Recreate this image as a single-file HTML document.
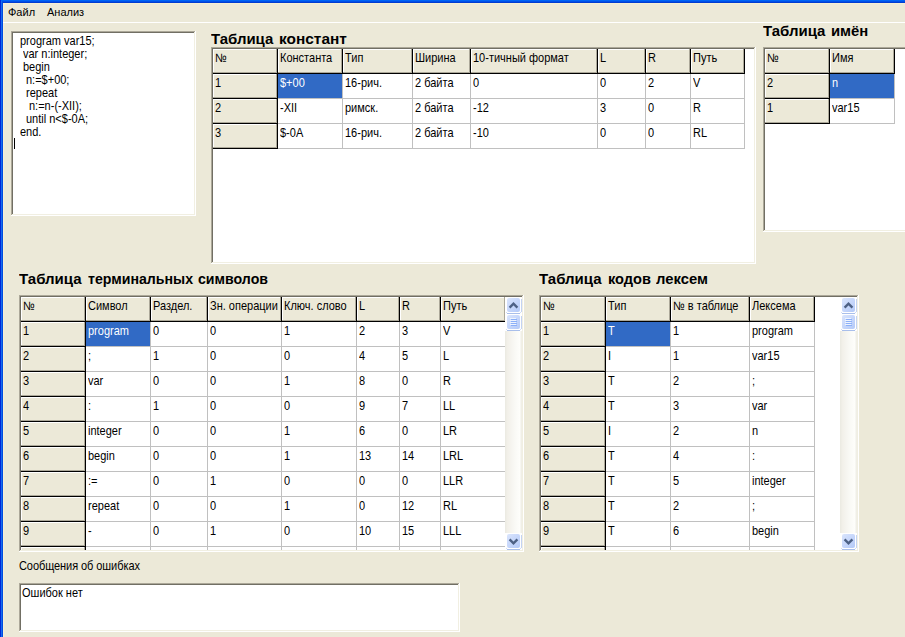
<!DOCTYPE html>
<html><head><meta charset="utf-8"><style>
html,body{margin:0;padding:0}
body{width:905px;height:637px;overflow:hidden;position:relative;background:#ECE9D8;font-family:"Liberation Sans",sans-serif}
div{position:absolute;box-sizing:content-box}
.t{font-size:11px;line-height:13px;white-space:pre;color:#000;transform:scaleY(1.1);transform-origin:0 10px}
.m{font-size:11px;line-height:13px;white-space:pre;color:#000}
.b{font-size:14px;font-weight:bold;line-height:16px;white-space:pre;color:#000}
</style></head><body>
<div style="left:0px;top:0px;width:905px;height:1px;background:#0064F6;"></div>
<div style="left:0px;top:1px;width:905px;height:1px;background:#0050E8;"></div>
<div style="left:0px;top:2px;width:905px;height:1px;background:#003CD2;"></div>
<div style="left:0px;top:0px;width:1px;height:637px;background:#0026D6;"></div>
<div style="left:1px;top:1px;width:1px;height:636px;background:#166CEE;"></div>
<div style="left:2px;top:2px;width:1px;height:635px;background:#004CE0;"></div>
<div style="left:3px;top:3px;width:902px;height:1px;background:#F7EFD4;"></div>
<div style="left:3px;top:3px;width:1px;height:634px;background:#F7EFD4;"></div>
<div class="m" style="left:8px;top:6px;color:#000;">Файл</div>
<div class="m" style="left:47px;top:6px;color:#000;">Анализ</div>
<div style="left:3px;top:22px;width:902px;height:1px;background:#fff;"></div>
<div style="left:11px;top:31px;width:185px;height:185px;background:#fff;"></div>
<div style="left:11px;top:31px;width:184px;height:184px;background:#ACA899;"></div>
<div style="left:12px;top:32px;width:183px;height:183px;background:#F1EFE2;"></div>
<div style="left:12px;top:32px;width:182px;height:182px;background:#716F64;"></div>
<div style="left:13px;top:33px;width:181px;height:181px;background:#fff;"></div>
<div class="t" style="left:20px;top:35px;color:#000;">program var15;</div>
<div class="t" style="left:23px;top:48px;color:#000;">var n:integer;</div>
<div class="t" style="left:23px;top:61px;color:#000;">begin</div>
<div class="t" style="left:26px;top:74px;color:#000;">n:=$+00;</div>
<div class="t" style="left:26px;top:87px;color:#000;">repeat</div>
<div class="t" style="left:29px;top:100px;color:#000;">n:=n-(-XII);</div>
<div class="t" style="left:26px;top:113px;color:#000;">until n<$-0A;</div>
<div class="t" style="left:20px;top:126px;color:#000;">end.</div>
<div style="left:14px;top:138px;width:1px;height:11px;background:#000;"></div>
<div class="b" style="left:211.30px;top:31px;transform:scaleX(1.0678);transform-origin:0 0">Таблица</div>
<div class="b" style="left:279.00px;top:31px;transform:scaleX(1.1016);transform-origin:0 0">констант</div>
<div style="left:211px;top:47px;width:545px;height:217px;background:#fff;"></div>
<div style="left:211px;top:47px;width:544px;height:216px;background:#ACA899;"></div>
<div style="left:212px;top:48px;width:543px;height:215px;background:#F1EFE2;"></div>
<div style="left:212px;top:48px;width:542px;height:214px;background:#716F64;"></div>
<div style="left:213px;top:49px;width:541px;height:213px;background:#fff;"></div>
<div style="left:213px;top:49px;width:541px;height:213px;overflow:hidden">
<div style="left:0px;top:0px;width:64px;height:24px;background:#ECE9D8;"></div>
<div style="left:0px;top:0px;width:64px;height:1px;background:#fff;"></div>
<div style="left:0px;top:0px;width:1px;height:24px;background:#fff;"></div>
<div style="left:0px;top:23px;width:64px;height:1px;background:#ACA899;"></div>
<div style="left:63px;top:0px;width:1px;height:24px;background:#ACA899;"></div>
<div style="left:64px;top:0px;width:1px;height:25px;background:#000;"></div>
<div style="left:0px;top:24px;width:65px;height:1px;background:#000;"></div>
<div class="t" style="left:2px;top:3px;color:#000">№</div>
<div style="left:65px;top:0px;width:64px;height:24px;background:#ECE9D8;"></div>
<div style="left:65px;top:0px;width:64px;height:1px;background:#fff;"></div>
<div style="left:65px;top:0px;width:1px;height:24px;background:#fff;"></div>
<div style="left:65px;top:23px;width:64px;height:1px;background:#ACA899;"></div>
<div style="left:128px;top:0px;width:1px;height:24px;background:#ACA899;"></div>
<div style="left:129px;top:0px;width:1px;height:25px;background:#000;"></div>
<div style="left:65px;top:24px;width:65px;height:1px;background:#000;"></div>
<div class="t" style="left:67px;top:3px;color:#000">Константа</div>
<div style="left:130px;top:0px;width:69px;height:24px;background:#ECE9D8;"></div>
<div style="left:130px;top:0px;width:69px;height:1px;background:#fff;"></div>
<div style="left:130px;top:0px;width:1px;height:24px;background:#fff;"></div>
<div style="left:130px;top:23px;width:69px;height:1px;background:#ACA899;"></div>
<div style="left:198px;top:0px;width:1px;height:24px;background:#ACA899;"></div>
<div style="left:199px;top:0px;width:1px;height:25px;background:#000;"></div>
<div style="left:130px;top:24px;width:70px;height:1px;background:#000;"></div>
<div class="t" style="left:132px;top:3px;color:#000">Тип</div>
<div style="left:200px;top:0px;width:57px;height:24px;background:#ECE9D8;"></div>
<div style="left:200px;top:0px;width:57px;height:1px;background:#fff;"></div>
<div style="left:200px;top:0px;width:1px;height:24px;background:#fff;"></div>
<div style="left:200px;top:23px;width:57px;height:1px;background:#ACA899;"></div>
<div style="left:256px;top:0px;width:1px;height:24px;background:#ACA899;"></div>
<div style="left:257px;top:0px;width:1px;height:25px;background:#000;"></div>
<div style="left:200px;top:24px;width:58px;height:1px;background:#000;"></div>
<div class="t" style="left:202px;top:3px;color:#000">Ширина</div>
<div style="left:258px;top:0px;width:126px;height:24px;background:#ECE9D8;"></div>
<div style="left:258px;top:0px;width:126px;height:1px;background:#fff;"></div>
<div style="left:258px;top:0px;width:1px;height:24px;background:#fff;"></div>
<div style="left:258px;top:23px;width:126px;height:1px;background:#ACA899;"></div>
<div style="left:383px;top:0px;width:1px;height:24px;background:#ACA899;"></div>
<div style="left:384px;top:0px;width:1px;height:25px;background:#000;"></div>
<div style="left:258px;top:24px;width:127px;height:1px;background:#000;"></div>
<div class="t" style="left:260px;top:3px;color:#000">10-тичный формат</div>
<div style="left:385px;top:0px;width:47px;height:24px;background:#ECE9D8;"></div>
<div style="left:385px;top:0px;width:47px;height:1px;background:#fff;"></div>
<div style="left:385px;top:0px;width:1px;height:24px;background:#fff;"></div>
<div style="left:385px;top:23px;width:47px;height:1px;background:#ACA899;"></div>
<div style="left:431px;top:0px;width:1px;height:24px;background:#ACA899;"></div>
<div style="left:432px;top:0px;width:1px;height:25px;background:#000;"></div>
<div style="left:385px;top:24px;width:48px;height:1px;background:#000;"></div>
<div class="t" style="left:387px;top:3px;color:#000">L</div>
<div style="left:433px;top:0px;width:44px;height:24px;background:#ECE9D8;"></div>
<div style="left:433px;top:0px;width:44px;height:1px;background:#fff;"></div>
<div style="left:433px;top:0px;width:1px;height:24px;background:#fff;"></div>
<div style="left:433px;top:23px;width:44px;height:1px;background:#ACA899;"></div>
<div style="left:476px;top:0px;width:1px;height:24px;background:#ACA899;"></div>
<div style="left:477px;top:0px;width:1px;height:25px;background:#000;"></div>
<div style="left:433px;top:24px;width:45px;height:1px;background:#000;"></div>
<div class="t" style="left:435px;top:3px;color:#000">R</div>
<div style="left:478px;top:0px;width:53px;height:24px;background:#ECE9D8;"></div>
<div style="left:478px;top:0px;width:53px;height:1px;background:#fff;"></div>
<div style="left:478px;top:0px;width:1px;height:24px;background:#fff;"></div>
<div style="left:478px;top:23px;width:53px;height:1px;background:#ACA899;"></div>
<div style="left:530px;top:0px;width:1px;height:24px;background:#ACA899;"></div>
<div style="left:531px;top:0px;width:1px;height:25px;background:#000;"></div>
<div style="left:478px;top:24px;width:54px;height:1px;background:#000;"></div>
<div class="t" style="left:480px;top:3px;color:#000">Путь</div>
<div style="left:0px;top:25px;width:64px;height:24px;background:#ECE9D8;"></div>
<div style="left:0px;top:25px;width:64px;height:1px;background:#fff;"></div>
<div style="left:0px;top:25px;width:1px;height:24px;background:#fff;"></div>
<div style="left:0px;top:48px;width:64px;height:1px;background:#ACA899;"></div>
<div style="left:63px;top:25px;width:1px;height:24px;background:#ACA899;"></div>
<div style="left:64px;top:25px;width:1px;height:25px;background:#000;"></div>
<div style="left:0px;top:49px;width:65px;height:1px;background:#000;"></div>
<div class="t" style="left:2px;top:28px;color:#000">1</div>
<div style="left:65px;top:25px;width:64px;height:24px;background:#316AC5;"></div>
<div style="left:129px;top:25px;width:1px;height:25px;background:#C0C0C0;"></div>
<div style="left:65px;top:49px;width:65px;height:1px;background:#C0C0C0;"></div>
<div class="t" style="left:67px;top:28px;color:#fff">$+00</div>
<div style="left:199px;top:25px;width:1px;height:25px;background:#C0C0C0;"></div>
<div style="left:130px;top:49px;width:70px;height:1px;background:#C0C0C0;"></div>
<div class="t" style="left:132px;top:28px;color:#000">16-рич.</div>
<div style="left:257px;top:25px;width:1px;height:25px;background:#C0C0C0;"></div>
<div style="left:200px;top:49px;width:58px;height:1px;background:#C0C0C0;"></div>
<div class="t" style="left:202px;top:28px;color:#000">2 байта</div>
<div style="left:384px;top:25px;width:1px;height:25px;background:#C0C0C0;"></div>
<div style="left:258px;top:49px;width:127px;height:1px;background:#C0C0C0;"></div>
<div class="t" style="left:260px;top:28px;color:#000">0</div>
<div style="left:432px;top:25px;width:1px;height:25px;background:#C0C0C0;"></div>
<div style="left:385px;top:49px;width:48px;height:1px;background:#C0C0C0;"></div>
<div class="t" style="left:387px;top:28px;color:#000">0</div>
<div style="left:477px;top:25px;width:1px;height:25px;background:#C0C0C0;"></div>
<div style="left:433px;top:49px;width:45px;height:1px;background:#C0C0C0;"></div>
<div class="t" style="left:435px;top:28px;color:#000">2</div>
<div style="left:531px;top:25px;width:1px;height:25px;background:#C0C0C0;"></div>
<div style="left:478px;top:49px;width:54px;height:1px;background:#C0C0C0;"></div>
<div class="t" style="left:480px;top:28px;color:#000">V</div>
<div style="left:0px;top:50px;width:64px;height:24px;background:#ECE9D8;"></div>
<div style="left:0px;top:50px;width:64px;height:1px;background:#fff;"></div>
<div style="left:0px;top:50px;width:1px;height:24px;background:#fff;"></div>
<div style="left:0px;top:73px;width:64px;height:1px;background:#ACA899;"></div>
<div style="left:63px;top:50px;width:1px;height:24px;background:#ACA899;"></div>
<div style="left:64px;top:50px;width:1px;height:25px;background:#000;"></div>
<div style="left:0px;top:74px;width:65px;height:1px;background:#000;"></div>
<div class="t" style="left:2px;top:53px;color:#000">2</div>
<div style="left:129px;top:50px;width:1px;height:25px;background:#C0C0C0;"></div>
<div style="left:65px;top:74px;width:65px;height:1px;background:#C0C0C0;"></div>
<div class="t" style="left:67px;top:53px;color:#000">-XII</div>
<div style="left:199px;top:50px;width:1px;height:25px;background:#C0C0C0;"></div>
<div style="left:130px;top:74px;width:70px;height:1px;background:#C0C0C0;"></div>
<div class="t" style="left:132px;top:53px;color:#000">римск.</div>
<div style="left:257px;top:50px;width:1px;height:25px;background:#C0C0C0;"></div>
<div style="left:200px;top:74px;width:58px;height:1px;background:#C0C0C0;"></div>
<div class="t" style="left:202px;top:53px;color:#000">2 байта</div>
<div style="left:384px;top:50px;width:1px;height:25px;background:#C0C0C0;"></div>
<div style="left:258px;top:74px;width:127px;height:1px;background:#C0C0C0;"></div>
<div class="t" style="left:260px;top:53px;color:#000">-12</div>
<div style="left:432px;top:50px;width:1px;height:25px;background:#C0C0C0;"></div>
<div style="left:385px;top:74px;width:48px;height:1px;background:#C0C0C0;"></div>
<div class="t" style="left:387px;top:53px;color:#000">3</div>
<div style="left:477px;top:50px;width:1px;height:25px;background:#C0C0C0;"></div>
<div style="left:433px;top:74px;width:45px;height:1px;background:#C0C0C0;"></div>
<div class="t" style="left:435px;top:53px;color:#000">0</div>
<div style="left:531px;top:50px;width:1px;height:25px;background:#C0C0C0;"></div>
<div style="left:478px;top:74px;width:54px;height:1px;background:#C0C0C0;"></div>
<div class="t" style="left:480px;top:53px;color:#000">R</div>
<div style="left:0px;top:75px;width:64px;height:24px;background:#ECE9D8;"></div>
<div style="left:0px;top:75px;width:64px;height:1px;background:#fff;"></div>
<div style="left:0px;top:75px;width:1px;height:24px;background:#fff;"></div>
<div style="left:0px;top:98px;width:64px;height:1px;background:#ACA899;"></div>
<div style="left:63px;top:75px;width:1px;height:24px;background:#ACA899;"></div>
<div style="left:64px;top:75px;width:1px;height:25px;background:#000;"></div>
<div style="left:0px;top:99px;width:65px;height:1px;background:#000;"></div>
<div class="t" style="left:2px;top:78px;color:#000">3</div>
<div style="left:129px;top:75px;width:1px;height:25px;background:#C0C0C0;"></div>
<div style="left:65px;top:99px;width:65px;height:1px;background:#C0C0C0;"></div>
<div class="t" style="left:67px;top:78px;color:#000">$-0A</div>
<div style="left:199px;top:75px;width:1px;height:25px;background:#C0C0C0;"></div>
<div style="left:130px;top:99px;width:70px;height:1px;background:#C0C0C0;"></div>
<div class="t" style="left:132px;top:78px;color:#000">16-рич.</div>
<div style="left:257px;top:75px;width:1px;height:25px;background:#C0C0C0;"></div>
<div style="left:200px;top:99px;width:58px;height:1px;background:#C0C0C0;"></div>
<div class="t" style="left:202px;top:78px;color:#000">2 байта</div>
<div style="left:384px;top:75px;width:1px;height:25px;background:#C0C0C0;"></div>
<div style="left:258px;top:99px;width:127px;height:1px;background:#C0C0C0;"></div>
<div class="t" style="left:260px;top:78px;color:#000">-10</div>
<div style="left:432px;top:75px;width:1px;height:25px;background:#C0C0C0;"></div>
<div style="left:385px;top:99px;width:48px;height:1px;background:#C0C0C0;"></div>
<div class="t" style="left:387px;top:78px;color:#000">0</div>
<div style="left:477px;top:75px;width:1px;height:25px;background:#C0C0C0;"></div>
<div style="left:433px;top:99px;width:45px;height:1px;background:#C0C0C0;"></div>
<div class="t" style="left:435px;top:78px;color:#000">0</div>
<div style="left:531px;top:75px;width:1px;height:25px;background:#C0C0C0;"></div>
<div style="left:478px;top:99px;width:54px;height:1px;background:#C0C0C0;"></div>
<div class="t" style="left:480px;top:78px;color:#000">RL</div>
</div>
<div class="b" style="left:763.30px;top:23px;transform:scaleX(1.0695);transform-origin:0 0">Таблица</div>
<div class="b" style="left:831.20px;top:23px;transform:scaleX(1.0600);transform-origin:0 0">имён</div>
<div style="left:763px;top:47px;width:238px;height:185px;background:#fff;"></div>
<div style="left:763px;top:47px;width:237px;height:184px;background:#ACA899;"></div>
<div style="left:764px;top:48px;width:236px;height:183px;background:#F1EFE2;"></div>
<div style="left:764px;top:48px;width:235px;height:182px;background:#716F64;"></div>
<div style="left:765px;top:49px;width:234px;height:181px;background:#fff;"></div>
<div style="left:765px;top:49px;width:234px;height:181px;overflow:hidden">
<div style="left:0px;top:0px;width:64px;height:24px;background:#ECE9D8;"></div>
<div style="left:0px;top:0px;width:64px;height:1px;background:#fff;"></div>
<div style="left:0px;top:0px;width:1px;height:24px;background:#fff;"></div>
<div style="left:0px;top:23px;width:64px;height:1px;background:#ACA899;"></div>
<div style="left:63px;top:0px;width:1px;height:24px;background:#ACA899;"></div>
<div style="left:64px;top:0px;width:1px;height:25px;background:#000;"></div>
<div style="left:0px;top:24px;width:65px;height:1px;background:#000;"></div>
<div class="t" style="left:2px;top:3px;color:#000">№</div>
<div style="left:65px;top:0px;width:64px;height:24px;background:#ECE9D8;"></div>
<div style="left:65px;top:0px;width:64px;height:1px;background:#fff;"></div>
<div style="left:65px;top:0px;width:1px;height:24px;background:#fff;"></div>
<div style="left:65px;top:23px;width:64px;height:1px;background:#ACA899;"></div>
<div style="left:128px;top:0px;width:1px;height:24px;background:#ACA899;"></div>
<div style="left:129px;top:0px;width:1px;height:25px;background:#000;"></div>
<div style="left:65px;top:24px;width:65px;height:1px;background:#000;"></div>
<div class="t" style="left:67px;top:3px;color:#000">Имя</div>
<div style="left:0px;top:25px;width:64px;height:24px;background:#ECE9D8;"></div>
<div style="left:0px;top:25px;width:64px;height:1px;background:#fff;"></div>
<div style="left:0px;top:25px;width:1px;height:24px;background:#fff;"></div>
<div style="left:0px;top:48px;width:64px;height:1px;background:#ACA899;"></div>
<div style="left:63px;top:25px;width:1px;height:24px;background:#ACA899;"></div>
<div style="left:64px;top:25px;width:1px;height:25px;background:#000;"></div>
<div style="left:0px;top:49px;width:65px;height:1px;background:#000;"></div>
<div class="t" style="left:2px;top:28px;color:#000">2</div>
<div style="left:65px;top:25px;width:64px;height:24px;background:#316AC5;"></div>
<div style="left:129px;top:25px;width:1px;height:25px;background:#C0C0C0;"></div>
<div style="left:65px;top:49px;width:65px;height:1px;background:#C0C0C0;"></div>
<div class="t" style="left:67px;top:28px;color:#fff">n</div>
<div style="left:0px;top:50px;width:64px;height:24px;background:#ECE9D8;"></div>
<div style="left:0px;top:50px;width:64px;height:1px;background:#fff;"></div>
<div style="left:0px;top:50px;width:1px;height:24px;background:#fff;"></div>
<div style="left:0px;top:73px;width:64px;height:1px;background:#ACA899;"></div>
<div style="left:63px;top:50px;width:1px;height:24px;background:#ACA899;"></div>
<div style="left:64px;top:50px;width:1px;height:25px;background:#000;"></div>
<div style="left:0px;top:74px;width:65px;height:1px;background:#000;"></div>
<div class="t" style="left:2px;top:53px;color:#000">1</div>
<div style="left:129px;top:50px;width:1px;height:25px;background:#C0C0C0;"></div>
<div style="left:65px;top:74px;width:65px;height:1px;background:#C0C0C0;"></div>
<div class="t" style="left:67px;top:53px;color:#000">var15</div>
</div>
<div class="b" style="left:19.30px;top:271px;transform:scaleX(1.0729);transform-origin:0 0">Таблица</div>
<div class="b" style="left:88.30px;top:271px;transform:scaleX(1.0106);transform-origin:0 0">терминальных</div>
<div class="b" style="left:198.20px;top:271px;transform:scaleX(1.0114);transform-origin:0 0">символов</div>
<div style="left:19px;top:295px;width:505px;height:257px;background:#fff;"></div>
<div style="left:19px;top:295px;width:504px;height:256px;background:#ACA899;"></div>
<div style="left:20px;top:296px;width:503px;height:255px;background:#F1EFE2;"></div>
<div style="left:20px;top:296px;width:502px;height:254px;background:#716F64;"></div>
<div style="left:21px;top:297px;width:501px;height:253px;background:#fff;"></div>
<div style="left:21px;top:297px;width:484px;height:253px;overflow:hidden">
<div style="left:0px;top:0px;width:64px;height:24px;background:#ECE9D8;"></div>
<div style="left:0px;top:0px;width:64px;height:1px;background:#fff;"></div>
<div style="left:0px;top:0px;width:1px;height:24px;background:#fff;"></div>
<div style="left:0px;top:23px;width:64px;height:1px;background:#ACA899;"></div>
<div style="left:63px;top:0px;width:1px;height:24px;background:#ACA899;"></div>
<div style="left:64px;top:0px;width:1px;height:25px;background:#000;"></div>
<div style="left:0px;top:24px;width:65px;height:1px;background:#000;"></div>
<div class="t" style="left:2px;top:3px;color:#000">№</div>
<div style="left:65px;top:0px;width:64px;height:24px;background:#ECE9D8;"></div>
<div style="left:65px;top:0px;width:64px;height:1px;background:#fff;"></div>
<div style="left:65px;top:0px;width:1px;height:24px;background:#fff;"></div>
<div style="left:65px;top:23px;width:64px;height:1px;background:#ACA899;"></div>
<div style="left:128px;top:0px;width:1px;height:24px;background:#ACA899;"></div>
<div style="left:129px;top:0px;width:1px;height:25px;background:#000;"></div>
<div style="left:65px;top:24px;width:65px;height:1px;background:#000;"></div>
<div class="t" style="left:67px;top:3px;color:#000">Символ</div>
<div style="left:130px;top:0px;width:56px;height:24px;background:#ECE9D8;"></div>
<div style="left:130px;top:0px;width:56px;height:1px;background:#fff;"></div>
<div style="left:130px;top:0px;width:1px;height:24px;background:#fff;"></div>
<div style="left:130px;top:23px;width:56px;height:1px;background:#ACA899;"></div>
<div style="left:185px;top:0px;width:1px;height:24px;background:#ACA899;"></div>
<div style="left:186px;top:0px;width:1px;height:25px;background:#000;"></div>
<div style="left:130px;top:24px;width:57px;height:1px;background:#000;"></div>
<div class="t" style="left:132px;top:3px;color:#000">Раздел.</div>
<div style="left:187px;top:0px;width:73px;height:24px;background:#ECE9D8;"></div>
<div style="left:187px;top:0px;width:73px;height:1px;background:#fff;"></div>
<div style="left:187px;top:0px;width:1px;height:24px;background:#fff;"></div>
<div style="left:187px;top:23px;width:73px;height:1px;background:#ACA899;"></div>
<div style="left:259px;top:0px;width:1px;height:24px;background:#ACA899;"></div>
<div style="left:260px;top:0px;width:1px;height:25px;background:#000;"></div>
<div style="left:187px;top:24px;width:74px;height:1px;background:#000;"></div>
<div class="t" style="left:189px;top:3px;color:#000">Зн. операции</div>
<div style="left:261px;top:0px;width:74px;height:24px;background:#ECE9D8;"></div>
<div style="left:261px;top:0px;width:74px;height:1px;background:#fff;"></div>
<div style="left:261px;top:0px;width:1px;height:24px;background:#fff;"></div>
<div style="left:261px;top:23px;width:74px;height:1px;background:#ACA899;"></div>
<div style="left:334px;top:0px;width:1px;height:24px;background:#ACA899;"></div>
<div style="left:335px;top:0px;width:1px;height:25px;background:#000;"></div>
<div style="left:261px;top:24px;width:75px;height:1px;background:#000;"></div>
<div class="t" style="left:263px;top:3px;color:#000">Ключ. слово</div>
<div style="left:336px;top:0px;width:42px;height:24px;background:#ECE9D8;"></div>
<div style="left:336px;top:0px;width:42px;height:1px;background:#fff;"></div>
<div style="left:336px;top:0px;width:1px;height:24px;background:#fff;"></div>
<div style="left:336px;top:23px;width:42px;height:1px;background:#ACA899;"></div>
<div style="left:377px;top:0px;width:1px;height:24px;background:#ACA899;"></div>
<div style="left:378px;top:0px;width:1px;height:25px;background:#000;"></div>
<div style="left:336px;top:24px;width:43px;height:1px;background:#000;"></div>
<div class="t" style="left:338px;top:3px;color:#000">L</div>
<div style="left:379px;top:0px;width:40px;height:24px;background:#ECE9D8;"></div>
<div style="left:379px;top:0px;width:40px;height:1px;background:#fff;"></div>
<div style="left:379px;top:0px;width:1px;height:24px;background:#fff;"></div>
<div style="left:379px;top:23px;width:40px;height:1px;background:#ACA899;"></div>
<div style="left:418px;top:0px;width:1px;height:24px;background:#ACA899;"></div>
<div style="left:419px;top:0px;width:1px;height:25px;background:#000;"></div>
<div style="left:379px;top:24px;width:41px;height:1px;background:#000;"></div>
<div class="t" style="left:381px;top:3px;color:#000">R</div>
<div style="left:420px;top:0px;width:64px;height:24px;background:#ECE9D8;"></div>
<div style="left:420px;top:0px;width:64px;height:1px;background:#fff;"></div>
<div style="left:420px;top:0px;width:1px;height:24px;background:#fff;"></div>
<div style="left:420px;top:23px;width:64px;height:1px;background:#ACA899;"></div>
<div style="left:483px;top:0px;width:1px;height:24px;background:#ACA899;"></div>
<div style="left:484px;top:0px;width:1px;height:25px;background:#000;"></div>
<div style="left:420px;top:24px;width:65px;height:1px;background:#000;"></div>
<div class="t" style="left:422px;top:3px;color:#000">Путь</div>
<div style="left:0px;top:25px;width:64px;height:24px;background:#ECE9D8;"></div>
<div style="left:0px;top:25px;width:64px;height:1px;background:#fff;"></div>
<div style="left:0px;top:25px;width:1px;height:24px;background:#fff;"></div>
<div style="left:0px;top:48px;width:64px;height:1px;background:#ACA899;"></div>
<div style="left:63px;top:25px;width:1px;height:24px;background:#ACA899;"></div>
<div style="left:64px;top:25px;width:1px;height:25px;background:#000;"></div>
<div style="left:0px;top:49px;width:65px;height:1px;background:#000;"></div>
<div class="t" style="left:2px;top:28px;color:#000">1</div>
<div style="left:65px;top:25px;width:64px;height:24px;background:#316AC5;"></div>
<div style="left:129px;top:25px;width:1px;height:25px;background:#C0C0C0;"></div>
<div style="left:65px;top:49px;width:65px;height:1px;background:#C0C0C0;"></div>
<div class="t" style="left:67px;top:28px;color:#fff">program</div>
<div style="left:186px;top:25px;width:1px;height:25px;background:#C0C0C0;"></div>
<div style="left:130px;top:49px;width:57px;height:1px;background:#C0C0C0;"></div>
<div class="t" style="left:132px;top:28px;color:#000">0</div>
<div style="left:260px;top:25px;width:1px;height:25px;background:#C0C0C0;"></div>
<div style="left:187px;top:49px;width:74px;height:1px;background:#C0C0C0;"></div>
<div class="t" style="left:189px;top:28px;color:#000">0</div>
<div style="left:335px;top:25px;width:1px;height:25px;background:#C0C0C0;"></div>
<div style="left:261px;top:49px;width:75px;height:1px;background:#C0C0C0;"></div>
<div class="t" style="left:263px;top:28px;color:#000">1</div>
<div style="left:378px;top:25px;width:1px;height:25px;background:#C0C0C0;"></div>
<div style="left:336px;top:49px;width:43px;height:1px;background:#C0C0C0;"></div>
<div class="t" style="left:338px;top:28px;color:#000">2</div>
<div style="left:419px;top:25px;width:1px;height:25px;background:#C0C0C0;"></div>
<div style="left:379px;top:49px;width:41px;height:1px;background:#C0C0C0;"></div>
<div class="t" style="left:381px;top:28px;color:#000">3</div>
<div style="left:484px;top:25px;width:1px;height:25px;background:#C0C0C0;"></div>
<div style="left:420px;top:49px;width:65px;height:1px;background:#C0C0C0;"></div>
<div class="t" style="left:422px;top:28px;color:#000">V</div>
<div style="left:0px;top:50px;width:64px;height:24px;background:#ECE9D8;"></div>
<div style="left:0px;top:50px;width:64px;height:1px;background:#fff;"></div>
<div style="left:0px;top:50px;width:1px;height:24px;background:#fff;"></div>
<div style="left:0px;top:73px;width:64px;height:1px;background:#ACA899;"></div>
<div style="left:63px;top:50px;width:1px;height:24px;background:#ACA899;"></div>
<div style="left:64px;top:50px;width:1px;height:25px;background:#000;"></div>
<div style="left:0px;top:74px;width:65px;height:1px;background:#000;"></div>
<div class="t" style="left:2px;top:53px;color:#000">2</div>
<div style="left:129px;top:50px;width:1px;height:25px;background:#C0C0C0;"></div>
<div style="left:65px;top:74px;width:65px;height:1px;background:#C0C0C0;"></div>
<div class="t" style="left:67px;top:53px;color:#000">;</div>
<div style="left:186px;top:50px;width:1px;height:25px;background:#C0C0C0;"></div>
<div style="left:130px;top:74px;width:57px;height:1px;background:#C0C0C0;"></div>
<div class="t" style="left:132px;top:53px;color:#000">1</div>
<div style="left:260px;top:50px;width:1px;height:25px;background:#C0C0C0;"></div>
<div style="left:187px;top:74px;width:74px;height:1px;background:#C0C0C0;"></div>
<div class="t" style="left:189px;top:53px;color:#000">0</div>
<div style="left:335px;top:50px;width:1px;height:25px;background:#C0C0C0;"></div>
<div style="left:261px;top:74px;width:75px;height:1px;background:#C0C0C0;"></div>
<div class="t" style="left:263px;top:53px;color:#000">0</div>
<div style="left:378px;top:50px;width:1px;height:25px;background:#C0C0C0;"></div>
<div style="left:336px;top:74px;width:43px;height:1px;background:#C0C0C0;"></div>
<div class="t" style="left:338px;top:53px;color:#000">4</div>
<div style="left:419px;top:50px;width:1px;height:25px;background:#C0C0C0;"></div>
<div style="left:379px;top:74px;width:41px;height:1px;background:#C0C0C0;"></div>
<div class="t" style="left:381px;top:53px;color:#000">5</div>
<div style="left:484px;top:50px;width:1px;height:25px;background:#C0C0C0;"></div>
<div style="left:420px;top:74px;width:65px;height:1px;background:#C0C0C0;"></div>
<div class="t" style="left:422px;top:53px;color:#000">L</div>
<div style="left:0px;top:75px;width:64px;height:24px;background:#ECE9D8;"></div>
<div style="left:0px;top:75px;width:64px;height:1px;background:#fff;"></div>
<div style="left:0px;top:75px;width:1px;height:24px;background:#fff;"></div>
<div style="left:0px;top:98px;width:64px;height:1px;background:#ACA899;"></div>
<div style="left:63px;top:75px;width:1px;height:24px;background:#ACA899;"></div>
<div style="left:64px;top:75px;width:1px;height:25px;background:#000;"></div>
<div style="left:0px;top:99px;width:65px;height:1px;background:#000;"></div>
<div class="t" style="left:2px;top:78px;color:#000">3</div>
<div style="left:129px;top:75px;width:1px;height:25px;background:#C0C0C0;"></div>
<div style="left:65px;top:99px;width:65px;height:1px;background:#C0C0C0;"></div>
<div class="t" style="left:67px;top:78px;color:#000">var</div>
<div style="left:186px;top:75px;width:1px;height:25px;background:#C0C0C0;"></div>
<div style="left:130px;top:99px;width:57px;height:1px;background:#C0C0C0;"></div>
<div class="t" style="left:132px;top:78px;color:#000">0</div>
<div style="left:260px;top:75px;width:1px;height:25px;background:#C0C0C0;"></div>
<div style="left:187px;top:99px;width:74px;height:1px;background:#C0C0C0;"></div>
<div class="t" style="left:189px;top:78px;color:#000">0</div>
<div style="left:335px;top:75px;width:1px;height:25px;background:#C0C0C0;"></div>
<div style="left:261px;top:99px;width:75px;height:1px;background:#C0C0C0;"></div>
<div class="t" style="left:263px;top:78px;color:#000">1</div>
<div style="left:378px;top:75px;width:1px;height:25px;background:#C0C0C0;"></div>
<div style="left:336px;top:99px;width:43px;height:1px;background:#C0C0C0;"></div>
<div class="t" style="left:338px;top:78px;color:#000">8</div>
<div style="left:419px;top:75px;width:1px;height:25px;background:#C0C0C0;"></div>
<div style="left:379px;top:99px;width:41px;height:1px;background:#C0C0C0;"></div>
<div class="t" style="left:381px;top:78px;color:#000">0</div>
<div style="left:484px;top:75px;width:1px;height:25px;background:#C0C0C0;"></div>
<div style="left:420px;top:99px;width:65px;height:1px;background:#C0C0C0;"></div>
<div class="t" style="left:422px;top:78px;color:#000">R</div>
<div style="left:0px;top:100px;width:64px;height:24px;background:#ECE9D8;"></div>
<div style="left:0px;top:100px;width:64px;height:1px;background:#fff;"></div>
<div style="left:0px;top:100px;width:1px;height:24px;background:#fff;"></div>
<div style="left:0px;top:123px;width:64px;height:1px;background:#ACA899;"></div>
<div style="left:63px;top:100px;width:1px;height:24px;background:#ACA899;"></div>
<div style="left:64px;top:100px;width:1px;height:25px;background:#000;"></div>
<div style="left:0px;top:124px;width:65px;height:1px;background:#000;"></div>
<div class="t" style="left:2px;top:103px;color:#000">4</div>
<div style="left:129px;top:100px;width:1px;height:25px;background:#C0C0C0;"></div>
<div style="left:65px;top:124px;width:65px;height:1px;background:#C0C0C0;"></div>
<div class="t" style="left:67px;top:103px;color:#000">:</div>
<div style="left:186px;top:100px;width:1px;height:25px;background:#C0C0C0;"></div>
<div style="left:130px;top:124px;width:57px;height:1px;background:#C0C0C0;"></div>
<div class="t" style="left:132px;top:103px;color:#000">1</div>
<div style="left:260px;top:100px;width:1px;height:25px;background:#C0C0C0;"></div>
<div style="left:187px;top:124px;width:74px;height:1px;background:#C0C0C0;"></div>
<div class="t" style="left:189px;top:103px;color:#000">0</div>
<div style="left:335px;top:100px;width:1px;height:25px;background:#C0C0C0;"></div>
<div style="left:261px;top:124px;width:75px;height:1px;background:#C0C0C0;"></div>
<div class="t" style="left:263px;top:103px;color:#000">0</div>
<div style="left:378px;top:100px;width:1px;height:25px;background:#C0C0C0;"></div>
<div style="left:336px;top:124px;width:43px;height:1px;background:#C0C0C0;"></div>
<div class="t" style="left:338px;top:103px;color:#000">9</div>
<div style="left:419px;top:100px;width:1px;height:25px;background:#C0C0C0;"></div>
<div style="left:379px;top:124px;width:41px;height:1px;background:#C0C0C0;"></div>
<div class="t" style="left:381px;top:103px;color:#000">7</div>
<div style="left:484px;top:100px;width:1px;height:25px;background:#C0C0C0;"></div>
<div style="left:420px;top:124px;width:65px;height:1px;background:#C0C0C0;"></div>
<div class="t" style="left:422px;top:103px;color:#000">LL</div>
<div style="left:0px;top:125px;width:64px;height:24px;background:#ECE9D8;"></div>
<div style="left:0px;top:125px;width:64px;height:1px;background:#fff;"></div>
<div style="left:0px;top:125px;width:1px;height:24px;background:#fff;"></div>
<div style="left:0px;top:148px;width:64px;height:1px;background:#ACA899;"></div>
<div style="left:63px;top:125px;width:1px;height:24px;background:#ACA899;"></div>
<div style="left:64px;top:125px;width:1px;height:25px;background:#000;"></div>
<div style="left:0px;top:149px;width:65px;height:1px;background:#000;"></div>
<div class="t" style="left:2px;top:128px;color:#000">5</div>
<div style="left:129px;top:125px;width:1px;height:25px;background:#C0C0C0;"></div>
<div style="left:65px;top:149px;width:65px;height:1px;background:#C0C0C0;"></div>
<div class="t" style="left:67px;top:128px;color:#000">integer</div>
<div style="left:186px;top:125px;width:1px;height:25px;background:#C0C0C0;"></div>
<div style="left:130px;top:149px;width:57px;height:1px;background:#C0C0C0;"></div>
<div class="t" style="left:132px;top:128px;color:#000">0</div>
<div style="left:260px;top:125px;width:1px;height:25px;background:#C0C0C0;"></div>
<div style="left:187px;top:149px;width:74px;height:1px;background:#C0C0C0;"></div>
<div class="t" style="left:189px;top:128px;color:#000">0</div>
<div style="left:335px;top:125px;width:1px;height:25px;background:#C0C0C0;"></div>
<div style="left:261px;top:149px;width:75px;height:1px;background:#C0C0C0;"></div>
<div class="t" style="left:263px;top:128px;color:#000">1</div>
<div style="left:378px;top:125px;width:1px;height:25px;background:#C0C0C0;"></div>
<div style="left:336px;top:149px;width:43px;height:1px;background:#C0C0C0;"></div>
<div class="t" style="left:338px;top:128px;color:#000">6</div>
<div style="left:419px;top:125px;width:1px;height:25px;background:#C0C0C0;"></div>
<div style="left:379px;top:149px;width:41px;height:1px;background:#C0C0C0;"></div>
<div class="t" style="left:381px;top:128px;color:#000">0</div>
<div style="left:484px;top:125px;width:1px;height:25px;background:#C0C0C0;"></div>
<div style="left:420px;top:149px;width:65px;height:1px;background:#C0C0C0;"></div>
<div class="t" style="left:422px;top:128px;color:#000">LR</div>
<div style="left:0px;top:150px;width:64px;height:24px;background:#ECE9D8;"></div>
<div style="left:0px;top:150px;width:64px;height:1px;background:#fff;"></div>
<div style="left:0px;top:150px;width:1px;height:24px;background:#fff;"></div>
<div style="left:0px;top:173px;width:64px;height:1px;background:#ACA899;"></div>
<div style="left:63px;top:150px;width:1px;height:24px;background:#ACA899;"></div>
<div style="left:64px;top:150px;width:1px;height:25px;background:#000;"></div>
<div style="left:0px;top:174px;width:65px;height:1px;background:#000;"></div>
<div class="t" style="left:2px;top:153px;color:#000">6</div>
<div style="left:129px;top:150px;width:1px;height:25px;background:#C0C0C0;"></div>
<div style="left:65px;top:174px;width:65px;height:1px;background:#C0C0C0;"></div>
<div class="t" style="left:67px;top:153px;color:#000">begin</div>
<div style="left:186px;top:150px;width:1px;height:25px;background:#C0C0C0;"></div>
<div style="left:130px;top:174px;width:57px;height:1px;background:#C0C0C0;"></div>
<div class="t" style="left:132px;top:153px;color:#000">0</div>
<div style="left:260px;top:150px;width:1px;height:25px;background:#C0C0C0;"></div>
<div style="left:187px;top:174px;width:74px;height:1px;background:#C0C0C0;"></div>
<div class="t" style="left:189px;top:153px;color:#000">0</div>
<div style="left:335px;top:150px;width:1px;height:25px;background:#C0C0C0;"></div>
<div style="left:261px;top:174px;width:75px;height:1px;background:#C0C0C0;"></div>
<div class="t" style="left:263px;top:153px;color:#000">1</div>
<div style="left:378px;top:150px;width:1px;height:25px;background:#C0C0C0;"></div>
<div style="left:336px;top:174px;width:43px;height:1px;background:#C0C0C0;"></div>
<div class="t" style="left:338px;top:153px;color:#000">13</div>
<div style="left:419px;top:150px;width:1px;height:25px;background:#C0C0C0;"></div>
<div style="left:379px;top:174px;width:41px;height:1px;background:#C0C0C0;"></div>
<div class="t" style="left:381px;top:153px;color:#000">14</div>
<div style="left:484px;top:150px;width:1px;height:25px;background:#C0C0C0;"></div>
<div style="left:420px;top:174px;width:65px;height:1px;background:#C0C0C0;"></div>
<div class="t" style="left:422px;top:153px;color:#000">LRL</div>
<div style="left:0px;top:175px;width:64px;height:24px;background:#ECE9D8;"></div>
<div style="left:0px;top:175px;width:64px;height:1px;background:#fff;"></div>
<div style="left:0px;top:175px;width:1px;height:24px;background:#fff;"></div>
<div style="left:0px;top:198px;width:64px;height:1px;background:#ACA899;"></div>
<div style="left:63px;top:175px;width:1px;height:24px;background:#ACA899;"></div>
<div style="left:64px;top:175px;width:1px;height:25px;background:#000;"></div>
<div style="left:0px;top:199px;width:65px;height:1px;background:#000;"></div>
<div class="t" style="left:2px;top:178px;color:#000">7</div>
<div style="left:129px;top:175px;width:1px;height:25px;background:#C0C0C0;"></div>
<div style="left:65px;top:199px;width:65px;height:1px;background:#C0C0C0;"></div>
<div class="t" style="left:67px;top:178px;color:#000">:=</div>
<div style="left:186px;top:175px;width:1px;height:25px;background:#C0C0C0;"></div>
<div style="left:130px;top:199px;width:57px;height:1px;background:#C0C0C0;"></div>
<div class="t" style="left:132px;top:178px;color:#000">0</div>
<div style="left:260px;top:175px;width:1px;height:25px;background:#C0C0C0;"></div>
<div style="left:187px;top:199px;width:74px;height:1px;background:#C0C0C0;"></div>
<div class="t" style="left:189px;top:178px;color:#000">1</div>
<div style="left:335px;top:175px;width:1px;height:25px;background:#C0C0C0;"></div>
<div style="left:261px;top:199px;width:75px;height:1px;background:#C0C0C0;"></div>
<div class="t" style="left:263px;top:178px;color:#000">0</div>
<div style="left:378px;top:175px;width:1px;height:25px;background:#C0C0C0;"></div>
<div style="left:336px;top:199px;width:43px;height:1px;background:#C0C0C0;"></div>
<div class="t" style="left:338px;top:178px;color:#000">0</div>
<div style="left:419px;top:175px;width:1px;height:25px;background:#C0C0C0;"></div>
<div style="left:379px;top:199px;width:41px;height:1px;background:#C0C0C0;"></div>
<div class="t" style="left:381px;top:178px;color:#000">0</div>
<div style="left:484px;top:175px;width:1px;height:25px;background:#C0C0C0;"></div>
<div style="left:420px;top:199px;width:65px;height:1px;background:#C0C0C0;"></div>
<div class="t" style="left:422px;top:178px;color:#000">LLR</div>
<div style="left:0px;top:200px;width:64px;height:24px;background:#ECE9D8;"></div>
<div style="left:0px;top:200px;width:64px;height:1px;background:#fff;"></div>
<div style="left:0px;top:200px;width:1px;height:24px;background:#fff;"></div>
<div style="left:0px;top:223px;width:64px;height:1px;background:#ACA899;"></div>
<div style="left:63px;top:200px;width:1px;height:24px;background:#ACA899;"></div>
<div style="left:64px;top:200px;width:1px;height:25px;background:#000;"></div>
<div style="left:0px;top:224px;width:65px;height:1px;background:#000;"></div>
<div class="t" style="left:2px;top:203px;color:#000">8</div>
<div style="left:129px;top:200px;width:1px;height:25px;background:#C0C0C0;"></div>
<div style="left:65px;top:224px;width:65px;height:1px;background:#C0C0C0;"></div>
<div class="t" style="left:67px;top:203px;color:#000">repeat</div>
<div style="left:186px;top:200px;width:1px;height:25px;background:#C0C0C0;"></div>
<div style="left:130px;top:224px;width:57px;height:1px;background:#C0C0C0;"></div>
<div class="t" style="left:132px;top:203px;color:#000">0</div>
<div style="left:260px;top:200px;width:1px;height:25px;background:#C0C0C0;"></div>
<div style="left:187px;top:224px;width:74px;height:1px;background:#C0C0C0;"></div>
<div class="t" style="left:189px;top:203px;color:#000">0</div>
<div style="left:335px;top:200px;width:1px;height:25px;background:#C0C0C0;"></div>
<div style="left:261px;top:224px;width:75px;height:1px;background:#C0C0C0;"></div>
<div class="t" style="left:263px;top:203px;color:#000">1</div>
<div style="left:378px;top:200px;width:1px;height:25px;background:#C0C0C0;"></div>
<div style="left:336px;top:224px;width:43px;height:1px;background:#C0C0C0;"></div>
<div class="t" style="left:338px;top:203px;color:#000">0</div>
<div style="left:419px;top:200px;width:1px;height:25px;background:#C0C0C0;"></div>
<div style="left:379px;top:224px;width:41px;height:1px;background:#C0C0C0;"></div>
<div class="t" style="left:381px;top:203px;color:#000">12</div>
<div style="left:484px;top:200px;width:1px;height:25px;background:#C0C0C0;"></div>
<div style="left:420px;top:224px;width:65px;height:1px;background:#C0C0C0;"></div>
<div class="t" style="left:422px;top:203px;color:#000">RL</div>
<div style="left:0px;top:225px;width:64px;height:24px;background:#ECE9D8;"></div>
<div style="left:0px;top:225px;width:64px;height:1px;background:#fff;"></div>
<div style="left:0px;top:225px;width:1px;height:24px;background:#fff;"></div>
<div style="left:0px;top:248px;width:64px;height:1px;background:#ACA899;"></div>
<div style="left:63px;top:225px;width:1px;height:24px;background:#ACA899;"></div>
<div style="left:64px;top:225px;width:1px;height:25px;background:#000;"></div>
<div style="left:0px;top:249px;width:65px;height:1px;background:#000;"></div>
<div class="t" style="left:2px;top:228px;color:#000">9</div>
<div style="left:129px;top:225px;width:1px;height:25px;background:#C0C0C0;"></div>
<div style="left:65px;top:249px;width:65px;height:1px;background:#C0C0C0;"></div>
<div class="t" style="left:67px;top:228px;color:#000">-</div>
<div style="left:186px;top:225px;width:1px;height:25px;background:#C0C0C0;"></div>
<div style="left:130px;top:249px;width:57px;height:1px;background:#C0C0C0;"></div>
<div class="t" style="left:132px;top:228px;color:#000">0</div>
<div style="left:260px;top:225px;width:1px;height:25px;background:#C0C0C0;"></div>
<div style="left:187px;top:249px;width:74px;height:1px;background:#C0C0C0;"></div>
<div class="t" style="left:189px;top:228px;color:#000">1</div>
<div style="left:335px;top:225px;width:1px;height:25px;background:#C0C0C0;"></div>
<div style="left:261px;top:249px;width:75px;height:1px;background:#C0C0C0;"></div>
<div class="t" style="left:263px;top:228px;color:#000">0</div>
<div style="left:378px;top:225px;width:1px;height:25px;background:#C0C0C0;"></div>
<div style="left:336px;top:249px;width:43px;height:1px;background:#C0C0C0;"></div>
<div class="t" style="left:338px;top:228px;color:#000">10</div>
<div style="left:419px;top:225px;width:1px;height:25px;background:#C0C0C0;"></div>
<div style="left:379px;top:249px;width:41px;height:1px;background:#C0C0C0;"></div>
<div class="t" style="left:381px;top:228px;color:#000">15</div>
<div style="left:484px;top:225px;width:1px;height:25px;background:#C0C0C0;"></div>
<div style="left:420px;top:249px;width:65px;height:1px;background:#C0C0C0;"></div>
<div class="t" style="left:422px;top:228px;color:#000">LLL</div>
<div style="left:0px;top:250px;width:64px;height:24px;background:#ECE9D8;"></div>
<div style="left:0px;top:250px;width:64px;height:1px;background:#fff;"></div>
<div style="left:0px;top:250px;width:1px;height:24px;background:#fff;"></div>
<div style="left:0px;top:273px;width:64px;height:1px;background:#ACA899;"></div>
<div style="left:63px;top:250px;width:1px;height:24px;background:#ACA899;"></div>
<div style="left:64px;top:250px;width:1px;height:25px;background:#000;"></div>
<div style="left:0px;top:274px;width:65px;height:1px;background:#000;"></div>
<div class="t" style="left:2px;top:253px;color:#000">10</div>
<div style="left:129px;top:250px;width:1px;height:25px;background:#C0C0C0;"></div>
<div style="left:65px;top:274px;width:65px;height:1px;background:#C0C0C0;"></div>
<div style="left:186px;top:250px;width:1px;height:25px;background:#C0C0C0;"></div>
<div style="left:130px;top:274px;width:57px;height:1px;background:#C0C0C0;"></div>
<div style="left:260px;top:250px;width:1px;height:25px;background:#C0C0C0;"></div>
<div style="left:187px;top:274px;width:74px;height:1px;background:#C0C0C0;"></div>
<div style="left:335px;top:250px;width:1px;height:25px;background:#C0C0C0;"></div>
<div style="left:261px;top:274px;width:75px;height:1px;background:#C0C0C0;"></div>
<div style="left:378px;top:250px;width:1px;height:25px;background:#C0C0C0;"></div>
<div style="left:336px;top:274px;width:43px;height:1px;background:#C0C0C0;"></div>
<div style="left:419px;top:250px;width:1px;height:25px;background:#C0C0C0;"></div>
<div style="left:379px;top:274px;width:41px;height:1px;background:#C0C0C0;"></div>
<div style="left:484px;top:250px;width:1px;height:25px;background:#C0C0C0;"></div>
<div style="left:420px;top:274px;width:65px;height:1px;background:#C0C0C0;"></div>
</div>
<div style="left:505px;top:297px;width:17px;height:253px;background:linear-gradient(to right,#ECEBE3 0.5px,#F2F0E9 2.5px,#F6F5F0 6.5px,#FAFAF6 10.5px,#FEFEFB 15px,#F0EFE7 16px)"></div>
<div style="left:505px;top:297px;width:17px;height:17px;background:#fff"><div style="left:2px;top:16px;width:13px;height:1px;background:#A9BFEB"></div><div style="left:1px;top:15px;width:1px;height:1px;background:#D2DEF6"></div><div style="left:15px;top:15px;width:1px;height:1px;background:#D2DEF6"></div><div style="left:16px;top:2px;width:1px;height:13px;background:#C3D3F3"></div><div style="left:2px;top:1px;width:13px;height:14px;border-radius:2px;background:linear-gradient(135deg,#DAE5FC 0%,#C8D8FB 45%,#B4CAF8 100%)"></div>
<svg style="position:absolute;left:0;top:0" width="17" height="17"><path d="M4.6 10.6 L8.5 6.7 L12.4 10.6" fill="none" stroke="#4D6185" stroke-width="2.4"/></svg>
</div>
<div style="left:505px;top:314px;width:17px;height:17px;background:#fff"><div style="left:2px;top:16px;width:13px;height:1px;background:#A9BFEB"></div><div style="left:1px;top:15px;width:1px;height:1px;background:#D2DEF6"></div><div style="left:15px;top:15px;width:1px;height:1px;background:#D2DEF6"></div><div style="left:16px;top:2px;width:1px;height:13px;background:#C3D3F3"></div><div style="left:2px;top:1px;width:13px;height:14px;border-radius:2px;background:linear-gradient(135deg,#DAE5FC 0%,#C8D8FB 45%,#B4CAF8 100%)"></div>
<div style="left:5px;top:4px;width:6px;height:1px;background:#EEF4FE"></div>
<div style="left:6px;top:5px;width:6px;height:1px;background:#8CB0F8"></div>
<div style="left:5px;top:6px;width:6px;height:1px;background:#EEF4FE"></div>
<div style="left:6px;top:7px;width:6px;height:1px;background:#8CB0F8"></div>
<div style="left:5px;top:8px;width:6px;height:1px;background:#EEF4FE"></div>
<div style="left:6px;top:9px;width:6px;height:1px;background:#8CB0F8"></div>
<div style="left:5px;top:10px;width:6px;height:1px;background:#EEF4FE"></div>
<div style="left:6px;top:11px;width:6px;height:1px;background:#8CB0F8"></div>
</div>
<div style="left:505px;top:533px;width:17px;height:17px;background:#fff"><div style="left:2px;top:16px;width:13px;height:1px;background:#A9BFEB"></div><div style="left:1px;top:15px;width:1px;height:1px;background:#D2DEF6"></div><div style="left:15px;top:15px;width:1px;height:1px;background:#D2DEF6"></div><div style="left:16px;top:2px;width:1px;height:13px;background:#C3D3F3"></div><div style="left:2px;top:1px;width:13px;height:14px;border-radius:2px;background:linear-gradient(135deg,#DAE5FC 0%,#C8D8FB 45%,#B4CAF8 100%)"></div>
<svg style="position:absolute;left:0;top:0" width="17" height="17"><path d="M4.6 6.4 L8.5 10.3 L12.4 6.4" fill="none" stroke="#4D6185" stroke-width="2.4"/></svg>
</div>
<div class="b" style="left:539.40px;top:271px;transform:scaleX(1.0712);transform-origin:0 0">Таблица</div>
<div class="b" style="left:607.60px;top:271px;transform:scaleX(1.0429);transform-origin:0 0">кодов</div>
<div class="b" style="left:656.30px;top:271px;transform:scaleX(1.0571);transform-origin:0 0">лексем</div>
<div style="left:539px;top:295px;width:320px;height:257px;background:#fff;"></div>
<div style="left:539px;top:295px;width:319px;height:256px;background:#ACA899;"></div>
<div style="left:540px;top:296px;width:318px;height:255px;background:#F1EFE2;"></div>
<div style="left:540px;top:296px;width:317px;height:254px;background:#716F64;"></div>
<div style="left:541px;top:297px;width:316px;height:253px;background:#fff;"></div>
<div style="left:541px;top:297px;width:299px;height:253px;overflow:hidden">
<div style="left:0px;top:0px;width:64px;height:24px;background:#ECE9D8;"></div>
<div style="left:0px;top:0px;width:64px;height:1px;background:#fff;"></div>
<div style="left:0px;top:0px;width:1px;height:24px;background:#fff;"></div>
<div style="left:0px;top:23px;width:64px;height:1px;background:#ACA899;"></div>
<div style="left:63px;top:0px;width:1px;height:24px;background:#ACA899;"></div>
<div style="left:64px;top:0px;width:1px;height:25px;background:#000;"></div>
<div style="left:0px;top:24px;width:65px;height:1px;background:#000;"></div>
<div class="t" style="left:2px;top:3px;color:#000">№</div>
<div style="left:65px;top:0px;width:64px;height:24px;background:#ECE9D8;"></div>
<div style="left:65px;top:0px;width:64px;height:1px;background:#fff;"></div>
<div style="left:65px;top:0px;width:1px;height:24px;background:#fff;"></div>
<div style="left:65px;top:23px;width:64px;height:1px;background:#ACA899;"></div>
<div style="left:128px;top:0px;width:1px;height:24px;background:#ACA899;"></div>
<div style="left:129px;top:0px;width:1px;height:25px;background:#000;"></div>
<div style="left:65px;top:24px;width:65px;height:1px;background:#000;"></div>
<div class="t" style="left:67px;top:3px;color:#000">Тип</div>
<div style="left:130px;top:0px;width:78px;height:24px;background:#ECE9D8;"></div>
<div style="left:130px;top:0px;width:78px;height:1px;background:#fff;"></div>
<div style="left:130px;top:0px;width:1px;height:24px;background:#fff;"></div>
<div style="left:130px;top:23px;width:78px;height:1px;background:#ACA899;"></div>
<div style="left:207px;top:0px;width:1px;height:24px;background:#ACA899;"></div>
<div style="left:208px;top:0px;width:1px;height:25px;background:#000;"></div>
<div style="left:130px;top:24px;width:79px;height:1px;background:#000;"></div>
<div class="t" style="left:132px;top:3px;color:#000">№ в таблице</div>
<div style="left:209px;top:0px;width:64px;height:24px;background:#ECE9D8;"></div>
<div style="left:209px;top:0px;width:64px;height:1px;background:#fff;"></div>
<div style="left:209px;top:0px;width:1px;height:24px;background:#fff;"></div>
<div style="left:209px;top:23px;width:64px;height:1px;background:#ACA899;"></div>
<div style="left:272px;top:0px;width:1px;height:24px;background:#ACA899;"></div>
<div style="left:273px;top:0px;width:1px;height:25px;background:#000;"></div>
<div style="left:209px;top:24px;width:65px;height:1px;background:#000;"></div>
<div class="t" style="left:211px;top:3px;color:#000">Лексема</div>
<div style="left:0px;top:25px;width:64px;height:24px;background:#ECE9D8;"></div>
<div style="left:0px;top:25px;width:64px;height:1px;background:#fff;"></div>
<div style="left:0px;top:25px;width:1px;height:24px;background:#fff;"></div>
<div style="left:0px;top:48px;width:64px;height:1px;background:#ACA899;"></div>
<div style="left:63px;top:25px;width:1px;height:24px;background:#ACA899;"></div>
<div style="left:64px;top:25px;width:1px;height:25px;background:#000;"></div>
<div style="left:0px;top:49px;width:65px;height:1px;background:#000;"></div>
<div class="t" style="left:2px;top:28px;color:#000">1</div>
<div style="left:65px;top:25px;width:64px;height:24px;background:#316AC5;"></div>
<div style="left:129px;top:25px;width:1px;height:25px;background:#C0C0C0;"></div>
<div style="left:65px;top:49px;width:65px;height:1px;background:#C0C0C0;"></div>
<div class="t" style="left:67px;top:28px;color:#fff">T</div>
<div style="left:208px;top:25px;width:1px;height:25px;background:#C0C0C0;"></div>
<div style="left:130px;top:49px;width:79px;height:1px;background:#C0C0C0;"></div>
<div class="t" style="left:132px;top:28px;color:#000">1</div>
<div style="left:273px;top:25px;width:1px;height:25px;background:#C0C0C0;"></div>
<div style="left:209px;top:49px;width:65px;height:1px;background:#C0C0C0;"></div>
<div class="t" style="left:211px;top:28px;color:#000">program</div>
<div style="left:0px;top:50px;width:64px;height:24px;background:#ECE9D8;"></div>
<div style="left:0px;top:50px;width:64px;height:1px;background:#fff;"></div>
<div style="left:0px;top:50px;width:1px;height:24px;background:#fff;"></div>
<div style="left:0px;top:73px;width:64px;height:1px;background:#ACA899;"></div>
<div style="left:63px;top:50px;width:1px;height:24px;background:#ACA899;"></div>
<div style="left:64px;top:50px;width:1px;height:25px;background:#000;"></div>
<div style="left:0px;top:74px;width:65px;height:1px;background:#000;"></div>
<div class="t" style="left:2px;top:53px;color:#000">2</div>
<div style="left:129px;top:50px;width:1px;height:25px;background:#C0C0C0;"></div>
<div style="left:65px;top:74px;width:65px;height:1px;background:#C0C0C0;"></div>
<div class="t" style="left:67px;top:53px;color:#000">I</div>
<div style="left:208px;top:50px;width:1px;height:25px;background:#C0C0C0;"></div>
<div style="left:130px;top:74px;width:79px;height:1px;background:#C0C0C0;"></div>
<div class="t" style="left:132px;top:53px;color:#000">1</div>
<div style="left:273px;top:50px;width:1px;height:25px;background:#C0C0C0;"></div>
<div style="left:209px;top:74px;width:65px;height:1px;background:#C0C0C0;"></div>
<div class="t" style="left:211px;top:53px;color:#000">var15</div>
<div style="left:0px;top:75px;width:64px;height:24px;background:#ECE9D8;"></div>
<div style="left:0px;top:75px;width:64px;height:1px;background:#fff;"></div>
<div style="left:0px;top:75px;width:1px;height:24px;background:#fff;"></div>
<div style="left:0px;top:98px;width:64px;height:1px;background:#ACA899;"></div>
<div style="left:63px;top:75px;width:1px;height:24px;background:#ACA899;"></div>
<div style="left:64px;top:75px;width:1px;height:25px;background:#000;"></div>
<div style="left:0px;top:99px;width:65px;height:1px;background:#000;"></div>
<div class="t" style="left:2px;top:78px;color:#000">3</div>
<div style="left:129px;top:75px;width:1px;height:25px;background:#C0C0C0;"></div>
<div style="left:65px;top:99px;width:65px;height:1px;background:#C0C0C0;"></div>
<div class="t" style="left:67px;top:78px;color:#000">T</div>
<div style="left:208px;top:75px;width:1px;height:25px;background:#C0C0C0;"></div>
<div style="left:130px;top:99px;width:79px;height:1px;background:#C0C0C0;"></div>
<div class="t" style="left:132px;top:78px;color:#000">2</div>
<div style="left:273px;top:75px;width:1px;height:25px;background:#C0C0C0;"></div>
<div style="left:209px;top:99px;width:65px;height:1px;background:#C0C0C0;"></div>
<div class="t" style="left:211px;top:78px;color:#000">;</div>
<div style="left:0px;top:100px;width:64px;height:24px;background:#ECE9D8;"></div>
<div style="left:0px;top:100px;width:64px;height:1px;background:#fff;"></div>
<div style="left:0px;top:100px;width:1px;height:24px;background:#fff;"></div>
<div style="left:0px;top:123px;width:64px;height:1px;background:#ACA899;"></div>
<div style="left:63px;top:100px;width:1px;height:24px;background:#ACA899;"></div>
<div style="left:64px;top:100px;width:1px;height:25px;background:#000;"></div>
<div style="left:0px;top:124px;width:65px;height:1px;background:#000;"></div>
<div class="t" style="left:2px;top:103px;color:#000">4</div>
<div style="left:129px;top:100px;width:1px;height:25px;background:#C0C0C0;"></div>
<div style="left:65px;top:124px;width:65px;height:1px;background:#C0C0C0;"></div>
<div class="t" style="left:67px;top:103px;color:#000">T</div>
<div style="left:208px;top:100px;width:1px;height:25px;background:#C0C0C0;"></div>
<div style="left:130px;top:124px;width:79px;height:1px;background:#C0C0C0;"></div>
<div class="t" style="left:132px;top:103px;color:#000">3</div>
<div style="left:273px;top:100px;width:1px;height:25px;background:#C0C0C0;"></div>
<div style="left:209px;top:124px;width:65px;height:1px;background:#C0C0C0;"></div>
<div class="t" style="left:211px;top:103px;color:#000">var</div>
<div style="left:0px;top:125px;width:64px;height:24px;background:#ECE9D8;"></div>
<div style="left:0px;top:125px;width:64px;height:1px;background:#fff;"></div>
<div style="left:0px;top:125px;width:1px;height:24px;background:#fff;"></div>
<div style="left:0px;top:148px;width:64px;height:1px;background:#ACA899;"></div>
<div style="left:63px;top:125px;width:1px;height:24px;background:#ACA899;"></div>
<div style="left:64px;top:125px;width:1px;height:25px;background:#000;"></div>
<div style="left:0px;top:149px;width:65px;height:1px;background:#000;"></div>
<div class="t" style="left:2px;top:128px;color:#000">5</div>
<div style="left:129px;top:125px;width:1px;height:25px;background:#C0C0C0;"></div>
<div style="left:65px;top:149px;width:65px;height:1px;background:#C0C0C0;"></div>
<div class="t" style="left:67px;top:128px;color:#000">I</div>
<div style="left:208px;top:125px;width:1px;height:25px;background:#C0C0C0;"></div>
<div style="left:130px;top:149px;width:79px;height:1px;background:#C0C0C0;"></div>
<div class="t" style="left:132px;top:128px;color:#000">2</div>
<div style="left:273px;top:125px;width:1px;height:25px;background:#C0C0C0;"></div>
<div style="left:209px;top:149px;width:65px;height:1px;background:#C0C0C0;"></div>
<div class="t" style="left:211px;top:128px;color:#000">n</div>
<div style="left:0px;top:150px;width:64px;height:24px;background:#ECE9D8;"></div>
<div style="left:0px;top:150px;width:64px;height:1px;background:#fff;"></div>
<div style="left:0px;top:150px;width:1px;height:24px;background:#fff;"></div>
<div style="left:0px;top:173px;width:64px;height:1px;background:#ACA899;"></div>
<div style="left:63px;top:150px;width:1px;height:24px;background:#ACA899;"></div>
<div style="left:64px;top:150px;width:1px;height:25px;background:#000;"></div>
<div style="left:0px;top:174px;width:65px;height:1px;background:#000;"></div>
<div class="t" style="left:2px;top:153px;color:#000">6</div>
<div style="left:129px;top:150px;width:1px;height:25px;background:#C0C0C0;"></div>
<div style="left:65px;top:174px;width:65px;height:1px;background:#C0C0C0;"></div>
<div class="t" style="left:67px;top:153px;color:#000">T</div>
<div style="left:208px;top:150px;width:1px;height:25px;background:#C0C0C0;"></div>
<div style="left:130px;top:174px;width:79px;height:1px;background:#C0C0C0;"></div>
<div class="t" style="left:132px;top:153px;color:#000">4</div>
<div style="left:273px;top:150px;width:1px;height:25px;background:#C0C0C0;"></div>
<div style="left:209px;top:174px;width:65px;height:1px;background:#C0C0C0;"></div>
<div class="t" style="left:211px;top:153px;color:#000">:</div>
<div style="left:0px;top:175px;width:64px;height:24px;background:#ECE9D8;"></div>
<div style="left:0px;top:175px;width:64px;height:1px;background:#fff;"></div>
<div style="left:0px;top:175px;width:1px;height:24px;background:#fff;"></div>
<div style="left:0px;top:198px;width:64px;height:1px;background:#ACA899;"></div>
<div style="left:63px;top:175px;width:1px;height:24px;background:#ACA899;"></div>
<div style="left:64px;top:175px;width:1px;height:25px;background:#000;"></div>
<div style="left:0px;top:199px;width:65px;height:1px;background:#000;"></div>
<div class="t" style="left:2px;top:178px;color:#000">7</div>
<div style="left:129px;top:175px;width:1px;height:25px;background:#C0C0C0;"></div>
<div style="left:65px;top:199px;width:65px;height:1px;background:#C0C0C0;"></div>
<div class="t" style="left:67px;top:178px;color:#000">T</div>
<div style="left:208px;top:175px;width:1px;height:25px;background:#C0C0C0;"></div>
<div style="left:130px;top:199px;width:79px;height:1px;background:#C0C0C0;"></div>
<div class="t" style="left:132px;top:178px;color:#000">5</div>
<div style="left:273px;top:175px;width:1px;height:25px;background:#C0C0C0;"></div>
<div style="left:209px;top:199px;width:65px;height:1px;background:#C0C0C0;"></div>
<div class="t" style="left:211px;top:178px;color:#000">integer</div>
<div style="left:0px;top:200px;width:64px;height:24px;background:#ECE9D8;"></div>
<div style="left:0px;top:200px;width:64px;height:1px;background:#fff;"></div>
<div style="left:0px;top:200px;width:1px;height:24px;background:#fff;"></div>
<div style="left:0px;top:223px;width:64px;height:1px;background:#ACA899;"></div>
<div style="left:63px;top:200px;width:1px;height:24px;background:#ACA899;"></div>
<div style="left:64px;top:200px;width:1px;height:25px;background:#000;"></div>
<div style="left:0px;top:224px;width:65px;height:1px;background:#000;"></div>
<div class="t" style="left:2px;top:203px;color:#000">8</div>
<div style="left:129px;top:200px;width:1px;height:25px;background:#C0C0C0;"></div>
<div style="left:65px;top:224px;width:65px;height:1px;background:#C0C0C0;"></div>
<div class="t" style="left:67px;top:203px;color:#000">T</div>
<div style="left:208px;top:200px;width:1px;height:25px;background:#C0C0C0;"></div>
<div style="left:130px;top:224px;width:79px;height:1px;background:#C0C0C0;"></div>
<div class="t" style="left:132px;top:203px;color:#000">2</div>
<div style="left:273px;top:200px;width:1px;height:25px;background:#C0C0C0;"></div>
<div style="left:209px;top:224px;width:65px;height:1px;background:#C0C0C0;"></div>
<div class="t" style="left:211px;top:203px;color:#000">;</div>
<div style="left:0px;top:225px;width:64px;height:24px;background:#ECE9D8;"></div>
<div style="left:0px;top:225px;width:64px;height:1px;background:#fff;"></div>
<div style="left:0px;top:225px;width:1px;height:24px;background:#fff;"></div>
<div style="left:0px;top:248px;width:64px;height:1px;background:#ACA899;"></div>
<div style="left:63px;top:225px;width:1px;height:24px;background:#ACA899;"></div>
<div style="left:64px;top:225px;width:1px;height:25px;background:#000;"></div>
<div style="left:0px;top:249px;width:65px;height:1px;background:#000;"></div>
<div class="t" style="left:2px;top:228px;color:#000">9</div>
<div style="left:129px;top:225px;width:1px;height:25px;background:#C0C0C0;"></div>
<div style="left:65px;top:249px;width:65px;height:1px;background:#C0C0C0;"></div>
<div class="t" style="left:67px;top:228px;color:#000">T</div>
<div style="left:208px;top:225px;width:1px;height:25px;background:#C0C0C0;"></div>
<div style="left:130px;top:249px;width:79px;height:1px;background:#C0C0C0;"></div>
<div class="t" style="left:132px;top:228px;color:#000">6</div>
<div style="left:273px;top:225px;width:1px;height:25px;background:#C0C0C0;"></div>
<div style="left:209px;top:249px;width:65px;height:1px;background:#C0C0C0;"></div>
<div class="t" style="left:211px;top:228px;color:#000">begin</div>
<div style="left:0px;top:250px;width:64px;height:24px;background:#ECE9D8;"></div>
<div style="left:0px;top:250px;width:64px;height:1px;background:#fff;"></div>
<div style="left:0px;top:250px;width:1px;height:24px;background:#fff;"></div>
<div style="left:0px;top:273px;width:64px;height:1px;background:#ACA899;"></div>
<div style="left:63px;top:250px;width:1px;height:24px;background:#ACA899;"></div>
<div style="left:64px;top:250px;width:1px;height:25px;background:#000;"></div>
<div style="left:0px;top:274px;width:65px;height:1px;background:#000;"></div>
<div class="t" style="left:2px;top:253px;color:#000">10</div>
<div style="left:129px;top:250px;width:1px;height:25px;background:#C0C0C0;"></div>
<div style="left:65px;top:274px;width:65px;height:1px;background:#C0C0C0;"></div>
<div style="left:208px;top:250px;width:1px;height:25px;background:#C0C0C0;"></div>
<div style="left:130px;top:274px;width:79px;height:1px;background:#C0C0C0;"></div>
<div style="left:273px;top:250px;width:1px;height:25px;background:#C0C0C0;"></div>
<div style="left:209px;top:274px;width:65px;height:1px;background:#C0C0C0;"></div>
</div>
<div style="left:840px;top:297px;width:17px;height:253px;background:linear-gradient(to right,#ECEBE3 0.5px,#F2F0E9 2.5px,#F6F5F0 6.5px,#FAFAF6 10.5px,#FEFEFB 15px,#F0EFE7 16px)"></div>
<div style="left:840px;top:297px;width:17px;height:17px;background:#fff"><div style="left:2px;top:16px;width:13px;height:1px;background:#A9BFEB"></div><div style="left:1px;top:15px;width:1px;height:1px;background:#D2DEF6"></div><div style="left:15px;top:15px;width:1px;height:1px;background:#D2DEF6"></div><div style="left:16px;top:2px;width:1px;height:13px;background:#C3D3F3"></div><div style="left:2px;top:1px;width:13px;height:14px;border-radius:2px;background:linear-gradient(135deg,#DAE5FC 0%,#C8D8FB 45%,#B4CAF8 100%)"></div>
<svg style="position:absolute;left:0;top:0" width="17" height="17"><path d="M4.6 10.6 L8.5 6.7 L12.4 10.6" fill="none" stroke="#4D6185" stroke-width="2.4"/></svg>
</div>
<div style="left:840px;top:314px;width:17px;height:17px;background:#fff"><div style="left:2px;top:16px;width:13px;height:1px;background:#A9BFEB"></div><div style="left:1px;top:15px;width:1px;height:1px;background:#D2DEF6"></div><div style="left:15px;top:15px;width:1px;height:1px;background:#D2DEF6"></div><div style="left:16px;top:2px;width:1px;height:13px;background:#C3D3F3"></div><div style="left:2px;top:1px;width:13px;height:14px;border-radius:2px;background:linear-gradient(135deg,#DAE5FC 0%,#C8D8FB 45%,#B4CAF8 100%)"></div>
<div style="left:5px;top:4px;width:6px;height:1px;background:#EEF4FE"></div>
<div style="left:6px;top:5px;width:6px;height:1px;background:#8CB0F8"></div>
<div style="left:5px;top:6px;width:6px;height:1px;background:#EEF4FE"></div>
<div style="left:6px;top:7px;width:6px;height:1px;background:#8CB0F8"></div>
<div style="left:5px;top:8px;width:6px;height:1px;background:#EEF4FE"></div>
<div style="left:6px;top:9px;width:6px;height:1px;background:#8CB0F8"></div>
<div style="left:5px;top:10px;width:6px;height:1px;background:#EEF4FE"></div>
<div style="left:6px;top:11px;width:6px;height:1px;background:#8CB0F8"></div>
</div>
<div style="left:840px;top:533px;width:17px;height:17px;background:#fff"><div style="left:2px;top:16px;width:13px;height:1px;background:#A9BFEB"></div><div style="left:1px;top:15px;width:1px;height:1px;background:#D2DEF6"></div><div style="left:15px;top:15px;width:1px;height:1px;background:#D2DEF6"></div><div style="left:16px;top:2px;width:1px;height:13px;background:#C3D3F3"></div><div style="left:2px;top:1px;width:13px;height:14px;border-radius:2px;background:linear-gradient(135deg,#DAE5FC 0%,#C8D8FB 45%,#B4CAF8 100%)"></div>
<svg style="position:absolute;left:0;top:0" width="17" height="17"><path d="M4.6 6.4 L8.5 10.3 L12.4 6.4" fill="none" stroke="#4D6185" stroke-width="2.4"/></svg>
</div>
<div class="t" style="left:19px;top:560px;color:#000;letter-spacing:-0.07px">Сообщения об ошибках</div>
<div style="left:19px;top:583px;width:441px;height:49px;background:#fff;"></div>
<div style="left:19px;top:583px;width:440px;height:48px;background:#ACA899;"></div>
<div style="left:20px;top:584px;width:439px;height:47px;background:#F1EFE2;"></div>
<div style="left:20px;top:584px;width:438px;height:46px;background:#716F64;"></div>
<div style="left:21px;top:585px;width:437px;height:45px;background:#fff;"></div>
<div class="t" style="left:22px;top:587px;color:#000;">Ошибок нет</div>
</body></html>
